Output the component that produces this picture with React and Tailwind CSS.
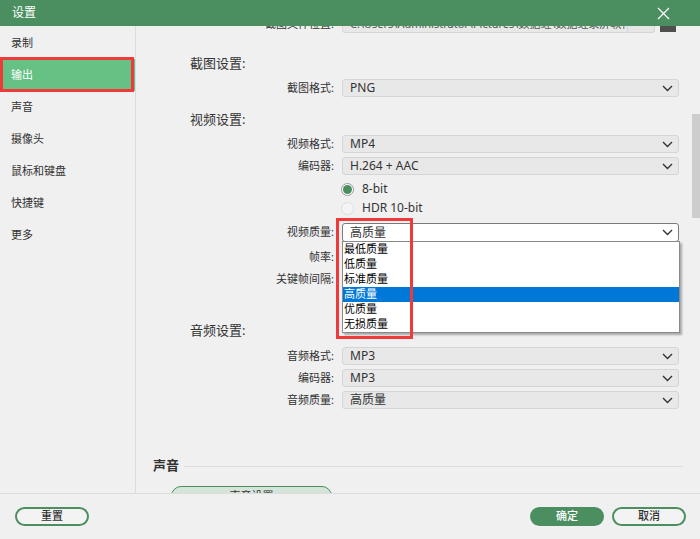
import React from 'react';

const font = "font-['Noto_Sans','Noto_Sans_CJK_SC',sans-serif]";

const sideItems = ['录制', '输出', '声音', '摄像头', '鼠标和键盘', '快捷键', '更多'];
const qualityOptions = ['最低质量', '低质量', '标准质量', '高质量', '优质量', '无损质量'];

const Chevron = () => (
  <svg width="11" height="7" viewBox="0 0 11 7" className="shrink-0">
    <path d="M1 1l4.5 4.5L10 1" fill="none" stroke="#333" strokeWidth="1.4" />
  </svg>
);

const Select = ({ value, white = false, children }) => (
  <div
    className={`relative ml-[8px] flex h-full w-[337px] items-center justify-between rounded-[3px] border pl-[7px] pr-[5px] text-[12px] text-[#333]
      ${white ? 'border-[#7a7a7a] bg-white' : 'border-[#d5d5d5] bg-[#e8e8e8]'}`}
  >
    <span className="truncate">{value}</span>
    <Chevron />
    {children}
  </div>
);

const Label = ({ children }) => (
  <div className="w-[198px] shrink-0 text-right text-[11px] text-[#333]">{children}</div>
);

const Row = ({ label, value, className = '', white, children }) => (
  <div className={`flex h-[18px] items-center ${className}`}>
    <Label>{label}</Label>
    {value !== undefined && (
      <Select value={value} white={white}>
        {children}
      </Select>
    )}
  </div>
);

const Header = ({ children, className = '' }) => (
  <div className={`flex h-[20px] items-center pl-[54px] text-[13px] text-[#333] ${className}`}>{children}</div>
);

const Radio = ({ checked, label, className = '' }) => (
  <div className={`flex h-[18px] items-center pl-[205px] ${className}`}>
    {checked ? (
      <span className="flex h-[13px] w-[13px] items-center justify-center rounded-full border border-[#9a9a9a] bg-white">
        <span className="h-[9px] w-[9px] rounded-full bg-[#4b8f60]" />
      </span>
    ) : (
      <span className="h-[13px] w-[13px] rounded-full border border-[#dedede] bg-[#f4f4f4]" />
    )}
    <span className="ml-[8px] text-[12px] text-[#333]">{label}</span>
  </div>
);

const FooterButton = ({ label, filled }) => (
  <button
    className={`flex h-[19px] w-[74px] items-center justify-center rounded-full border-2 border-[#4b8f60] text-[11px] font-medium
      ${filled ? 'bg-[#4b8f60] text-white' : 'bg-[#f3f3f3] text-[#333]'}`}
  >
    {label}
  </button>
);

export default function App() {
  return (
    <div className={`flex h-[539px] w-[700px] flex-col overflow-hidden bg-[#f0f0f0] ${font}`}>
      {/* Title bar */}
      <div className="relative z-20 flex h-[26px] shrink-0 items-center justify-between bg-[#4b8f60] pl-[12px] pr-[30px]">
        <span className="text-[12px] text-white">设置</span>
        <svg width="13" height="13" viewBox="0 0 13 13">
          <path d="M1 1l11 11M12 1L1 12" stroke="#fff" strokeWidth="1.2" />
        </svg>
      </div>

      <div className="flex min-h-0 flex-1">
        {/* Sidebar */}
        <aside className="w-[136px] shrink-0 border-r border-[#dcdcdc] pt-[1px]">
          {sideItems.map((item, i) => (
            <div
              key={item}
              className={`relative flex h-[32px] items-center pl-[11px] text-[11px]
                ${i === 1 ? 'bg-[#66c184] text-white' : 'text-[#333]'}`}
            >
              {item}
              {i === 1 && (
                <div className="absolute left-0 top-[-2px] h-[35px] w-[134px] border-[3px] border-[#f03a3a]" />
              )}
            </div>
          ))}
        </aside>

        {/* Content */}
        <main className="relative min-w-0 flex-1 overflow-hidden">
          <div className="-mt-[11px]">
            <div className="flex h-[18px] items-center">
              <Label>截图文件位置:</Label>
              <div className="ml-[8px] flex h-full w-[286px] items-center overflow-hidden whitespace-nowrap rounded-l-[3px] border border-[#d5d5d5] bg-[#e8e8e8] pl-[7px] text-[11px] text-[#555]">
                C:\Users\Administrator\Pictures\数据蛙\数据蛙录屏软件
              </div>
              <div className="h-full w-[27px] rounded-r-[3px] border border-l-0 border-[#d5d5d5] bg-[#e6e6e6]" />
              <div className="ml-[5px] h-[16px] w-[16px] bg-[#505050]" />
            </div>

            <Header className="mt-[21px]">截图设置:</Header>
            <Row label="截图格式:" value="PNG" className="mt-[5px]" />

            <Header className="mt-[13px]">视频设置:</Header>
            <Row label="视频格式:" value="MP4" className="mt-[5px]" />
            <Row label="编码器:" value="H.264 + AAC" className="mt-[4px]" />
            <Radio checked label="8-bit" className="mt-[5px]" />
            <Radio label="HDR 10-bit" className="mt-[1px]" />

            <div className="relative z-10 mt-[6px] flex h-[19px] items-center">
              <Label>视频质量:</Label>
              <Select value="高质量" white>
                <div className="absolute left-[-1px] top-full w-[338px] border border-[#8a8a8a] bg-white shadow-[2px_2px_2px_rgba(0,0,0,0.3)]">
                  {qualityOptions.map((opt, i) => (
                    <div
                      key={opt}
                      className={`flex h-[15px] items-center pl-[1px] text-[11px]
                        ${i === 3 ? 'bg-[#0078d7] text-white' : 'text-black'}`}
                    >
                      {opt}
                    </div>
                  ))}
                </div>
                <div className="absolute left-[-7px] top-[-6px] h-[121px] w-[77px] border-[3px] border-[#f03a3a]" />
              </Select>
            </div>
            <Row label="帧率:" value="" className="mt-[6px]" />
            <Row label="关键帧间隔:" value="" className="mt-[4px]" />

            <Header className="mt-[33px]">音频设置:</Header>
            <Row label="音频格式:" value="MP3" className="mt-[6px]" />
            <Row label="编码器:" value="MP3" className="mt-[4px]" />
            <Row label="音频质量:" value="高质量" className="mt-[4px]" />

            <div className="mt-[49px] flex h-[16px] items-center pl-[17px] pr-[17px]">
              <span className="text-[13px] font-bold text-[#333]">声音</span>
              <div className="ml-[5px] h-px flex-1 bg-[#dcdcdc]" />
            </div>
            <div className="ml-[35px] mt-[12px] flex h-[20px] w-[161px] items-start justify-center rounded-full border border-[#4b8f60] bg-[#d4e4d8] pt-[1px] text-[11px] text-[#333]">
              声音设置
            </div>
          </div>

          {/* Scrollbar thumb */}
          <div className="absolute right-0 top-[88px] h-[104px] w-[8px] bg-[#cdcdcd]" />
        </main>
      </div>

      {/* Footer */}
      <footer className="flex h-[46px] shrink-0 items-center justify-between border-t border-[#dcdcdc] pl-[15px] pr-[14px] pb-[1px]">
        <FooterButton label="重置" />
        <div className="flex gap-[8px]">
          <FooterButton label="确定" filled />
          <FooterButton label="取消" />
        </div>
      </footer>
    </div>
  );
}
